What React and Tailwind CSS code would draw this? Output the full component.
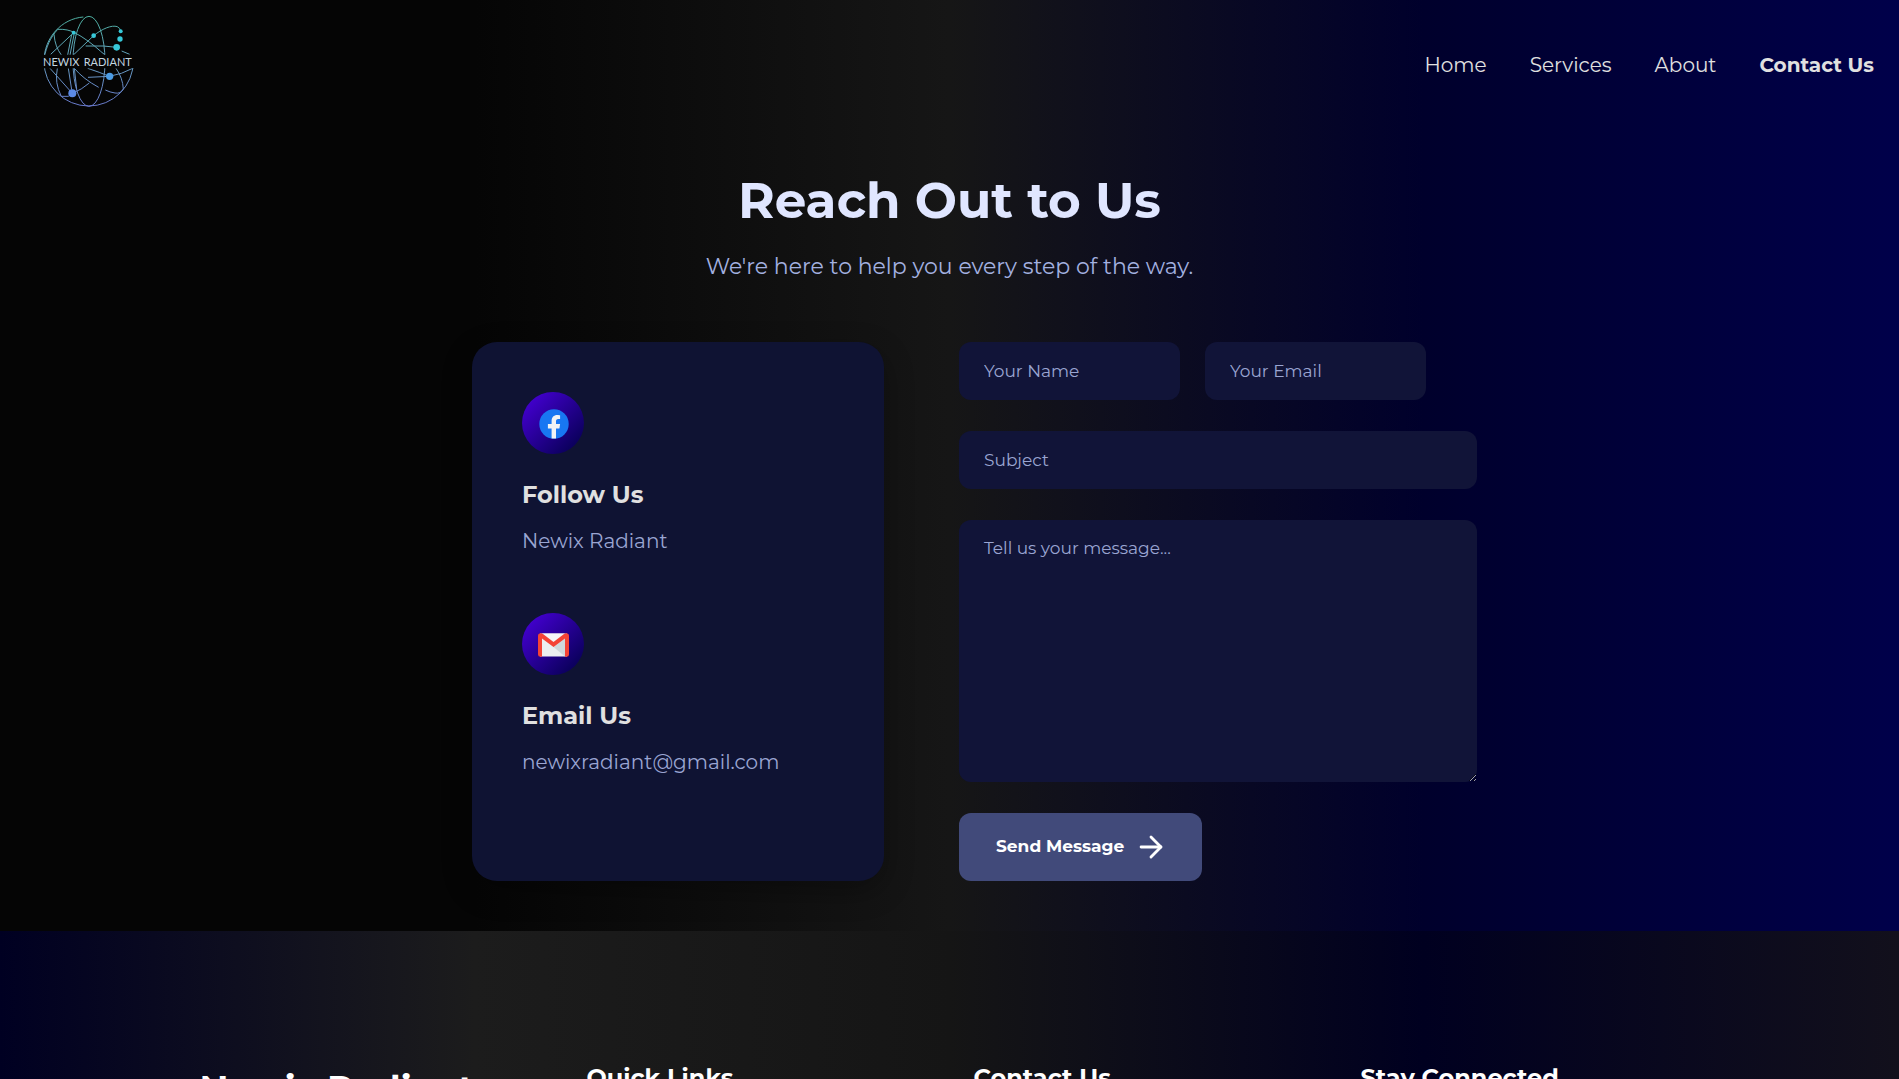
import React from "react";
import { ArrowRight } from "lucide-react";

const navLinks = ["Home", "Services", "About"];

const field =
  "block rounded-xl border-0 bg-[#111438] px-[25px] text-[17px] text-[#a3b1e0] placeholder:text-[#9aa5d2] outline-none";

function Logo() {
  return (
    <svg viewBox="60 40 291 291" className="size-[97px]" fill="none" role="img" aria-label="Newix Radiant">
      <defs>
        <linearGradient id="globe" gradientUnits="userSpaceOnUse" x1="0" y1="48" x2="0" y2="322">
          <stop offset="0" stopColor="#4cae9e" />
          <stop offset="0.5" stopColor="#659fc0" />
          <stop offset="1" stopColor="#6878cc" />
        </linearGradient>
        <clipPath id="bands">
          <rect x="60" y="40" width="291" height="125" />
          <rect x="60" y="206" width="291" height="125" />
        </clipPath>
      </defs>
      <g stroke="url(#globe)" strokeWidth="3" clipPath="url(#bands)">
        <path d="M190 52C125 57 72 114 72 185a134 134 0 0 0 268 0V206" />
        <ellipse cx="207" cy="185" rx="48" ry="135" />
        <path d="M72 175C80 140 90 115 113 89C135 88 150 92 162 98C190 112 220 135 242 155L254 165" />
        <path d="M102 104C104 130 112 150 124 166M92 164L160 100M143 166L155 105M150 166L162 105" />
        <path d="M160 166L221 108C245 88 275 75 292 81Q301 85 302 95" />
        <path d="M197 139H250L290 143M305 154L329 164" />
        <path d="M90 206L157 281M145 206L155 270M163 206L170 268" />
        <path d="M112 206Q103 250 124 290H145L157 281Q185 270 208 250" />
        <path d="M163 206Q190 238 236 263M203 206Q240 218 268 230Q305 224 338 206" />
        <path d="M204 233L268 230M288 206Q308 234 310 268Q302 283 285 280Q270 278 256 271" />
      </g>
      <g fill="#37c8d8">
        <circle cx="161" cy="99" r="6" />
        <circle cx="221" cy="108" r="7" />
        <circle cx="302" cy="95" r="6" />
        <circle cx="300" cy="118" r="8" />
        <circle cx="290" cy="143" r="10" />
      </g>
      <circle cx="269" cy="230" r="11" fill="#4c9ce4" />
      <circle cx="157" cy="281" r="12" fill="#5c8ae6" />
      <g fill="#c3d6e0" fontFamily="Lato, sans-serif" fontWeight="400" fontSize="33">
        <text x="69" y="198">NEWIX</text>
        <text x="191" y="198">RADIANT</text>
      </g>
    </svg>
  );
}

function FacebookIcon() {
  return (
    <svg viewBox="0 0 30 30" className="size-[30px]" aria-hidden="true">
      <circle cx="15" cy="15" r="14.7" fill="#1877f2" />
      <path
        d="M12.6 29.6V19.4H8.9V15.1h3.7v-3.2c0-3.8 2.2-6 5.7-6 1.2 0 2.8.3 2.8.3v3.7h-1.8c-1.8 0-2.3 1.1-2.3 2.2v3h4.1l-.7 4.3H17v10.2z"
        fill="#f1f3f5"
      />
    </svg>
  );
}

function GmailIcon() {
  return (
    <svg viewBox="0 0 31 24" className="h-6 w-[31px]" aria-hidden="true">
      <path d="M2 0.5H29V23.5H2z" fill="#eceff1" />
      <path d="M15.5 14L27 5.5V23.5z" fill="#cfd8dc" />
      <path d="M4 0.5H27L15.5 9z" fill="#f4f6f8" />
      <path
        d="M0 3Q0 0.3 2.7 0.3Q4 0.3 5 1L15.5 9L26 1Q27 0.3 28.3 0.3Q31 0.3 31 3V21.5Q31 23.7 28.5 23.7H27V5.6L15.5 14L4 5.6V23.7H2.5Q0 23.7 0 21.5z"
        fill="#f44336"
      />
    </svg>
  );
}

function ContactItem({ icon, title, children }) {
  return (
    <section>
      <div className="flex size-[62px] items-center justify-center rounded-full bg-[linear-gradient(135deg,#4b00e0,#000046)] pt-px pl-px">
        {icon}
      </div>
      <h2 className="mt-[25px] text-[24px] leading-8 font-bold text-[#e0e0e0]">{title}</h2>
      <p className="mt-4 text-[20px] leading-7 text-[#9aa5d2]">{children}</p>
    </section>
  );
}

export default function App() {
  return (
    <div className="flex h-screen flex-col overflow-hidden bg-[linear-gradient(90deg,#050505_0%,#050505_25%,#161616_50%,#00002c_75%,#00004a_100%)] font-[Montserrat,Inter,sans-serif]">
      <header className="flex h-[124px] shrink-0 items-center justify-between pr-[25px] pb-0.5 pl-10">
        <a href="#home">
          <Logo />
        </a>
        <nav className="flex items-center gap-[43px] pt-2 text-[20px] whitespace-nowrap text-[#e0e0e0]">
          {navLinks.map((label) => (
            <a key={label} href="#page">
              {label}
            </a>
          ))}
          <a href="#contact" className="font-bold">
            Contact Us
          </a>
        </nav>
      </header>

      <main className="shrink-0 pb-[50px]">
        <div className="pt-[45px] text-center">
          <h1 className="text-[50px] leading-[64px] font-bold text-[#e0e6ff]">Reach Out to Us</h1>
          <p className="mt-5 text-[22px] leading-7 text-[#a3b1e0]">We're here to help you every step of the way.</p>
        </div>

        <div className="mx-auto mt-[61px] flex w-full max-w-[955px] gap-[75px]">
          <aside className="flex w-[412px] shrink-0 flex-col gap-[58px] rounded-[25px] bg-[#0f1333] p-[50px] shadow-[0_10px_30px_rgba(0,0,0,0.3)]">
            <ContactItem icon={<FacebookIcon />} title="Follow Us">
              Newix Radiant
            </ContactItem>
            <ContactItem icon={<GmailIcon />} title="Email Us">
              newixradiant@gmail.com
            </ContactItem>
          </aside>

          <form className="flex w-[518px] shrink-0 flex-col items-start gap-[31px]">
            <div className="flex gap-[25px]">
              <input aria-label="Your Name" placeholder="Your Name" className={`${field} h-[58px] w-[221px]`} />
              <input aria-label="Your Email" type="email" placeholder="Your Email" className={`${field} h-[58px] w-[221px]`} />
            </div>
            <input aria-label="Subject" placeholder="Subject" className={`${field} h-[58px] w-full`} />
            <textarea
              aria-label="Message"
              placeholder="Tell us your message..."
              className={`${field} h-[262px] w-full resize py-4`}
            />
            <button
              type="submit"
              className="flex h-[68px] items-center gap-2.5 rounded-xl bg-[#414a7a] pr-[34px] pl-[37px] text-[17px] font-bold text-white"
            >
              Send Message
              <ArrowRight size={34} aria-hidden="true" />
            </button>
          </form>
        </div>
      </main>

      <footer className="grow bg-[linear-gradient(90deg,#000022_0%,#1c1c1c_25%,#151515_50%,#000020_75%,#12101c_100%)] pt-[131px] text-white">
        <div className="mx-auto grid max-w-[1500px] grid-cols-4 gap-12">
          <h2 className="text-[36px] leading-[54px] font-bold whitespace-nowrap">Newix Radiant</h2>
          <h3 className="text-[24px] leading-8 font-bold">Quick Links</h3>
          <h3 className="text-[24px] leading-8 font-bold">Contact Us</h3>
          <h3 className="text-[24px] leading-8 font-bold">Stay Connected</h3>
        </div>
      </footer>
    </div>
  );
}
